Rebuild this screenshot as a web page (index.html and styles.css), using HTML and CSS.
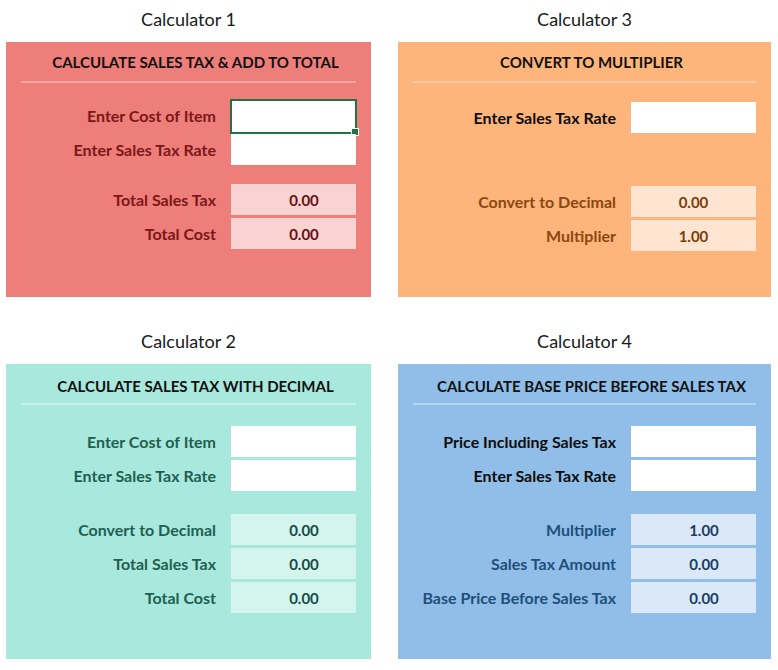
FILE: index.html
```html
<!DOCTYPE html>
<html lang="en">
<head>
<meta charset="utf-8">
<title>Sales Tax Calculators</title>
<link rel="stylesheet" href="styles.css">
</head>
<body>
<div class="sheet">
  <section class="calc">
    <h2 class="caption">Calculator 1</h2>
    <div class="panel panel-red panel-short">
      <div class="head">CALCULATE SALES TAX &amp; ADD TO TOTAL</div>
      <div class="group">
        <div class="row"><span class="label">Enter Cost of Item</span><span class="cell input selected"></span></div>
        <div class="row"><span class="label">Enter Sales Tax Rate</span><span class="cell input"></span></div>
      </div>
      <div class="group">
        <div class="row"><span class="label">Total Sales Tax</span><span class="cell out">0.00</span></div>
        <div class="row"><span class="label">Total Cost</span><span class="cell out">0.00</span></div>
      </div>
    </div>
  </section>

  <section class="calc">
    <h2 class="caption">Calculator 3</h2>
    <div class="panel panel-orange panel-short">
      <div class="head">CONVERT TO MULTIPLIER</div>
      <div class="group group-first-low">
        <div class="row"><span class="label label-input">Enter Sales Tax Rate</span><span class="cell input"></span></div>
      </div>
      <div class="group group-after-gap">
        <div class="row"><span class="label">Convert to Decimal</span><span class="cell out centered">0.00</span></div>
        <div class="row"><span class="label">Multiplier</span><span class="cell out centered">1.00</span></div>
      </div>
    </div>
  </section>

  <section class="calc">
    <h2 class="caption">Calculator 2</h2>
    <div class="panel panel-teal panel-tall">
      <div class="head">CALCULATE SALES TAX WITH DECIMAL</div>
      <div class="group">
        <div class="row"><span class="label">Enter Cost of Item</span><span class="cell input"></span></div>
        <div class="row"><span class="label">Enter Sales Tax Rate</span><span class="cell input"></span></div>
      </div>
      <div class="group">
        <div class="row"><span class="label">Convert to Decimal</span><span class="cell out">0.00</span></div>
        <div class="row"><span class="label">Total Sales Tax</span><span class="cell out">0.00</span></div>
        <div class="row"><span class="label">Total Cost</span><span class="cell out">0.00</span></div>
      </div>
    </div>
  </section>

  <section class="calc">
    <h2 class="caption">Calculator 4</h2>
    <div class="panel panel-blue panel-tall">
      <div class="head">CALCULATE BASE PRICE BEFORE SALES TAX</div>
      <div class="group">
        <div class="row"><span class="label label-input">Price Including Sales Tax</span><span class="cell input"></span></div>
        <div class="row"><span class="label label-input">Enter Sales Tax Rate</span><span class="cell input"></span></div>
      </div>
      <div class="group">
        <div class="row"><span class="label">Multiplier</span><span class="cell out">1.00</span></div>
        <div class="row"><span class="label">Sales Tax Amount</span><span class="cell out">0.00</span></div>
        <div class="row"><span class="label">Base Price Before Sales Tax</span><span class="cell out">0.00</span></div>
      </div>
    </div>
  </section>
</div>
</body>
</html>
```

FILE: styles.css
```css
* { box-sizing: border-box; }

html, body {
  margin: 0;
  padding: 0;
  background: #ffffff;
}

body {
  font-family: "Lato", "Open Sans", "DejaVu Sans", sans-serif;
  color: #111;
}

.sheet {
  display: grid;
  grid-template-columns: 365px 373px;
  column-gap: 27px;
  row-gap: 25px;
  padding-left: 6px;
}

.calc {
  display: flex;
  flex-direction: column;
}

.caption {
  margin: 0;
  height: 42px;
  padding-top: 8px;
  font-size: 18px;
  line-height: 22px;
  font-weight: 400;
  text-align: center;
  color: #1a1a1a;
}

.panel {
  display: flex;
  flex-direction: column;
  padding: 0 15px;
}

.panel-short { height: 255px; }
.panel-tall { height: 295px; }

.head {
  padding: 10px 0 9px 14px;
  font-size: 15px;
  line-height: 20px;
  font-weight: 700;
  text-align: center;
  color: #111;
  border-bottom: 2px solid rgba(255, 255, 255, 0.35);
}

.panel-tall .head { padding-top: 12px; padding-bottom: 7px; }

.group {
  display: flex;
  flex-direction: column;
  gap: 3px;
  margin-top: 17px;
}

.panel-short .group + .group { margin-top: 19px; }
.group.group-first-low { margin-top: 19px; }
.panel-short .group.group-after-gap { margin-top: 53px; }

.panel-tall .group { margin-top: 21px; }
.panel-tall .group + .group { margin-top: 23px; }

.row {
  display: grid;
  grid-template-columns: 1fr 125px;
  column-gap: 15px;
  height: 31px;
  align-items: center;
}

.label {
  text-align: right;
  font-size: 16px;
  font-weight: 700;
  white-space: nowrap;
}

.cell {
  position: relative;
  height: 31px;
  display: flex;
  align-items: center;
  justify-content: center;
  font-size: 15px;
  font-weight: 700;
}

.cell.out { padding-left: 21px; }
.cell.out.centered { padding-left: 0; }

.input { background: #ffffff; }

.selected {
  border: 2px solid #217346;
  height: 35px;
  margin: -1px -1px -3px -1px;
  align-self: start;
  margin-top: -1px;
}

.selected::after {
  content: "";
  position: absolute;
  right: -4px;
  bottom: -4px;
  width: 6px;
  height: 6px;
  background: #217346;
  border: 1px solid #ffffff;
}

/* Red */
.panel-red { background: #ed7e7a; }
.panel-red .head { border-bottom-color: #f5a7a3; }
.panel-red .label { color: #7b1717; }
.panel-red .out { background: #f9d3d2; color: #6a0f0f; }

/* Orange */
.panel-orange { background: #fdb57b; }
.panel-orange .head { border-bottom-color: #fdcb9f; }
.panel-orange .label { color: #8b4710; }
.panel-orange .out { background: #fee5d1; color: #7a3d0a; }

/* Teal */
.panel-teal { background: #a9e8dc; }
.panel-teal .head { border-bottom-color: #c9f2ea; }
.panel-teal .label { color: #1f5f51; }
.panel-teal .out { background: #d4f4ee; color: #184a40; }

/* Blue */
.panel-blue { background: #90bee8; }
.panel-blue .head { border-bottom-color: #b5d4f1; }
.panel-blue .label { color: #1f4e7a; }
.panel-blue .out { background: #dae8f7; color: #1a3d63; }

.panel .label.label-input { color: #0d0d0d; }
```
